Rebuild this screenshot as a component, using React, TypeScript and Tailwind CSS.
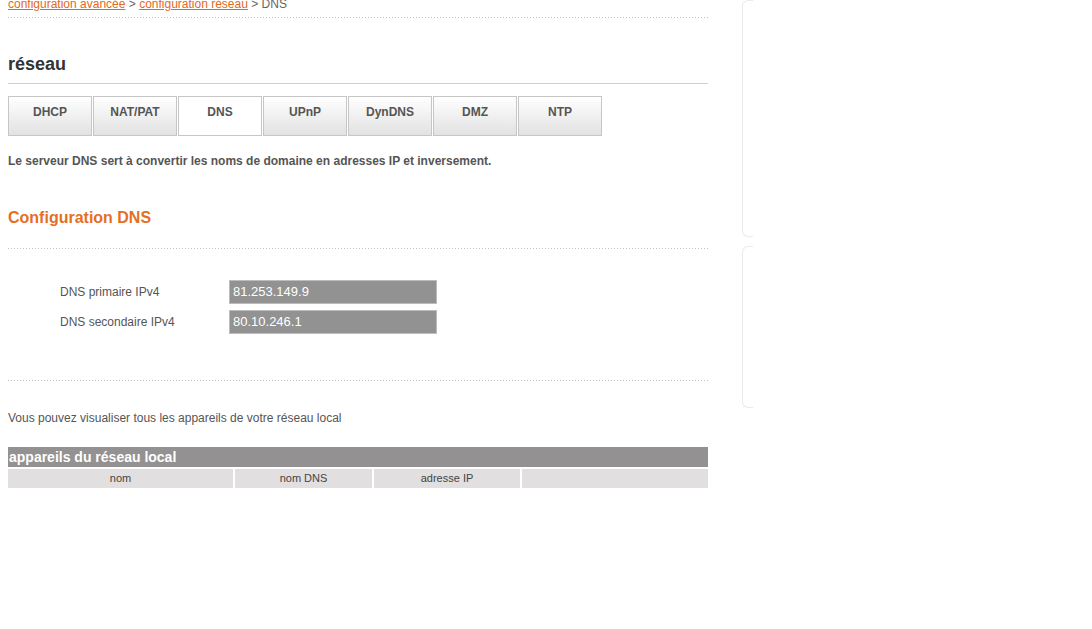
const tabs = ["DHCP", "NAT/PAT", "DNS", "UPnP", "DynDNS", "DMZ", "NTP"];

const dnsRows = [
  { label: "DNS primaire IPv4", value: "81.253.149.9" },
  { label: "DNS secondaire IPv4", value: "80.10.246.1" },
];

function Dotted({ className = "" }: { className?: string }) {
  return (
    <div
      className={
        "h-px w-full bg-[repeating-linear-gradient(to_right,#c9c1b3_0_1px,transparent_1px_3px)] " +
        className
      }
    />
  );
}

export default function App() {
  return (
    <div
      className="flex min-h-[629px] w-[1092px] overflow-hidden bg-white text-[12px] text-[#555]"
      style={{ fontFamily: '"Liberation Sans", Arial, sans-serif' }}
    >
      {/* colonne principale */}
      <div className="ml-2 w-[700px] shrink-0">
        {/* fil d'ariane */}
        <div className="mt-[-3px] leading-[14px] text-[#666]">
          <a href="#" className="text-[#e2691d] underline">
            configuration avancée
          </a>{" "}
          &gt;{" "}
          <a href="#" className="text-[#e2691d] underline">
            configuration réseau
          </a>{" "}
          &gt; DNS
        </div>
        <Dotted className="mt-[6px]" />

        <h1 className="mt-[35px] border-b border-[#cfcfcf] pb-2 text-[18px] font-bold leading-[22px] text-[#333]">
          réseau
        </h1>

        {/* onglets */}
        <div className="mt-3 flex gap-px">
          {tabs.map((t) => (
            <div
              key={t}
              className={
                t === "DNS"
                  ? "h-10 w-[84px] border border-[#c6c6c6] bg-white pt-[8px] text-center font-bold leading-[14px] text-[#555]"
                  : "h-10 w-[84px] border border-[#c6c6c6] bg-gradient-to-b from-white to-[#e2e2e2] pt-[8px] text-center font-bold leading-[14px] text-[#555]"
              }
            >
              {t}
            </div>
          ))}
        </div>

        <p className="mt-[18px] font-bold leading-[14px]">
          Le serveur DNS sert à convertir les noms de domaine en adresses IP et inversement.
        </p>

        <h2 className="mt-10 text-[16px] font-bold leading-[19px] text-[#e4701f]">
          Configuration DNS
        </h2>
        <Dotted className="mt-[21px]" />

        {/* champs DNS */}
        <div className="mt-[31px] flex flex-col gap-[6px]">
          {dnsRows.map((r) => (
            <div key={r.label} className="flex items-center">
              <span className="w-[221px] shrink-0 pl-[52px] leading-[14px]">{r.label}</span>
              <div className="h-6 w-[208px] border border-[#bdbdbd] bg-[#929292] pl-[3px] text-[13px] leading-[22px] text-white">
                {r.value}
              </div>
            </div>
          ))}
        </div>

        <Dotted className="mt-[46px]" />

        <p className="mt-[30px] leading-[14px]">
          Vous pouvez visualiser tous les appareils de votre réseau local
        </p>

        {/* tableau */}
        <div className="mt-[22px]">
          <div className="h-5 bg-[#939191] pl-px text-[14px] font-bold leading-5 text-white">
            appareils du réseau local
          </div>
          <div className="mt-[2px] flex gap-[2px] text-[11px] leading-[19px] text-[#444]">
            <div className="h-[19px] w-[225px] bg-[#e1dfdf] text-center">nom</div>
            <div className="h-[19px] w-[137px] bg-[#e1dfdf] text-center">nom DNS</div>
            <div className="h-[19px] w-[146px] bg-[#e1dfdf] text-center">adresse IP</div>
            <div className="h-[19px] flex-1 bg-[#e1dfdf]" />
          </div>
        </div>
      </div>

      {/* colonne de droite */}
      <div className="ml-[34px] flex flex-col">
        <div className="h-[237px] w-[11px] rounded-l-[6px] border border-r-0 border-[#ebebeb]" />
        <div className="mt-[9px] h-[162px] w-[11px] rounded-l-[6px] border border-r-0 border-[#ebebeb]" />
      </div>
    </div>
  );
}
